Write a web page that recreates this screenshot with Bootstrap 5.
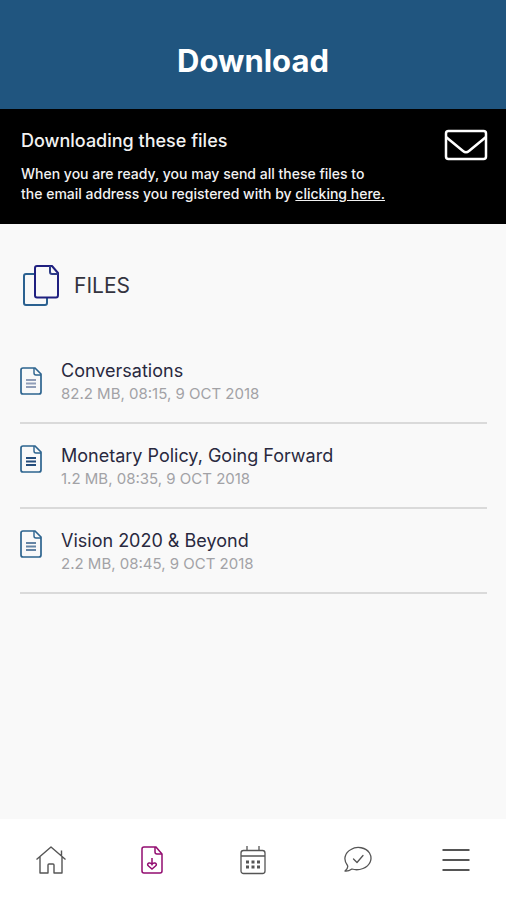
<!DOCTYPE html>
<html lang="en">
<head>
<meta charset="utf-8">
<meta name="viewport" content="width=device-width, initial-scale=1">
<title>Download</title>
<link href="https://cdn.jsdelivr.net/npm/bootstrap@5.3.0/dist/css/bootstrap.min.css" rel="stylesheet">
<style>
  body { font-family: Inter, "Liberation Sans", sans-serif; background: #f9f9f9; color: #25253f; }
  svg { display: block; fill: none; flex: none; }
  .page-top { background: #20557f; padding: 40px 20px 28px; }
  .page-top h1 { font-size: 31px; line-height: 41px; font-weight: 700; }
  .notice { background: #000; color: #f2f2f2; padding: 20px 18px 20px 21px; }
  .notice h2 { font-size: 18px; line-height: 24px; font-weight: 500; margin-bottom: 11px; }
  .notice p { font-size: 14px; line-height: 20px; font-weight: 500; }
  .files { padding: 41px 19px 20px 20px; }
  .files h2 { font-size: 21px; line-height: 26px; font-weight: 400; color: #34343f; }
  .file-list { margin-top: 32px; }
  .file-row { padding: 20px 0 18px; border-bottom: 2px solid #dadada; gap: 19px; }
  .file-row svg { margin-top: 8px; }
  .file-row + .file-row svg { margin-top: 1px; }
  .file-row a { font-size: 18px; line-height: 24px; color: #29293f; }
  .file-row small { font-size: 15px; line-height: 21px; color: #a2a2a6; }
  .tab-bar { background: #fff; height: 81px; }
  .tab-bar a { color: #555; }
  .tab-bar a.active { color: #920c70; }
</style>
<script src="https://cdn.jsdelivr.net/npm/bootstrap@5.3.0/dist/js/bootstrap.bundle.min.js" defer></script>
</head>
<body class="d-flex flex-column min-vh-100">
<svg width="0" height="0" class="position-absolute" aria-hidden="true">
  <symbol id="doc" viewBox="0 0 22 28">
    <path d="M3 1H15L21 7V25Q21 27 19 27H3Q1 27 1 25V3Q1 1 3 1Z" stroke="#2d648f" stroke-width="1.7"/>
    <path d="M14 1V6Q14 8 16 8H21" stroke="#2d648f" stroke-width="1.4"/>
    <path d="M6 13H16M6 16.500H16M6 20H16" stroke="currentColor" stroke-width="1.8"/>
  </symbol>
</svg>

<header class="page-top text-center text-white">
  <h1 class="m-0">Download</h1>
</header>

<section class="notice d-flex justify-content-between align-items-start">
  <div>
    <h2>Downloading these files</h2>
    <p class="mb-0">When you are ready, you may send all these files to<br>the email address you registered with by <a href="#" class="text-reset">clicking here.</a></p>
  </div>
  <svg width="44" height="32" viewBox="0 0 44 32" stroke="#fff" stroke-width="2.500" stroke-linejoin="round" aria-hidden="true">
    <rect x="2" y="2" width="40" height="28" rx="2.500"/>
    <path d="M2 8L19 22Q22 24.500 25 22L42 8"/>
  </svg>
</section>

<main class="files flex-grow-1">
  <div class="d-flex align-items-center">
    <svg width="54" height="42" viewBox="0 0 54 42" stroke-width="2" stroke-linejoin="round" aria-hidden="true">
      <path d="M14 9H6Q4 9 4 11V38Q4 40 6 40H25Q27 40 27 38V33" stroke="#2b6190"/>
      <path d="M17 1H32L38 8V30Q38 32.500 36 32.500H17Q15 32.500 15 30.500V3Q15 1 17 1Z" stroke="#202080"/>
      <path d="M30 1V7Q30 9 32 9H38" stroke="#2d3c86"/>
    </svg>
    <h2 class="m-0">FILES</h2>
  </div>

  <ul class="file-list list-unstyled mb-0">
    <li class="file-row d-flex">
      <svg width="22" height="28" color="#909db7" aria-hidden="true"><use href="#doc"/></svg>
      <div><a href="#" class="d-block text-decoration-none">Conversations</a><small class="d-block">82.2 MB, 08:15, 9 OCT 2018</small></div>
    </li>
    <li class="file-row d-flex">
      <svg width="22" height="28" color="#254d7c" aria-hidden="true"><use href="#doc"/></svg>
      <div><a href="#" class="d-block text-decoration-none">Monetary Policy, Going Forward</a><small class="d-block">1.2 MB, 08:35, 9 OCT 2018</small></div>
    </li>
    <li class="file-row d-flex">
      <svg width="22" height="28" color="#6484a4" aria-hidden="true"><use href="#doc"/></svg>
      <div><a href="#" class="d-block text-decoration-none">Vision 2020 &amp; Beyond</a><small class="d-block">2.2 MB, 08:45, 9 OCT 2018</small></div>
    </li>
  </ul>
</main>

<nav class="tab-bar row row-cols-5 g-0 align-items-center sticky-bottom" aria-label="Main">
  <a href="#" class="col d-flex justify-content-center" aria-label="Home">
    <svg width="30" height="30" viewBox="0 0 30 30" stroke="currentColor" stroke-width="1.400" stroke-linejoin="round">
      <path d="M.5 14.500L15 2L29.500 14.500M4 12V28H12V20Q12 19 13 19H17Q18 19 18 20V28H26V12M25.500 11V5.500"/>
    </svg>
  </a>
  <a href="#" class="col d-flex justify-content-center active" aria-label="Downloads" aria-current="page">
    <svg width="22" height="28" viewBox="0 0 22 28" stroke="currentColor" stroke-width="1.500">
      <path d="M3 1H15L21 8V25Q21 27 19 27H3Q1 27 1 25V3Q1 1 3 1Z"/>
      <path d="M14 1V6Q14 8 16 8H21M11 12V18.500M8 17Q10 16.500 11 18.500Q12 16.500 14 17Q16.500 18 14.500 20L11 23L7.500 20Q5.500 18 8 17Z"/>
    </svg>
  </a>
  <a href="#" class="col d-flex justify-content-center" aria-label="Calendar">
    <svg width="26" height="30" viewBox="0 0 26 30" stroke="currentColor" stroke-width="1.300">
      <rect x="1" y="5.500" width="24" height="23" rx="2.500"/>
      <path d="M1 11H25M7 1V5.500M19 1V5.500"/>
      <path d="M6 17H20M6 22H20" stroke-width="3" stroke-dasharray="3 2.500"/>
    </svg>
  </a>
  <a href="#" class="col d-flex justify-content-center" aria-label="Messages">
    <svg width="36" height="28" viewBox="-8 0 36 28" stroke="currentColor" stroke-width="1.300" stroke-linejoin="round" stroke-linecap="round">
      <path d="M3.500 19.500C-1 14 .5 7 7 3.500C13-.3 22 1.500 25.500 7C29 13 26 20 19 22.500C15 24 11 24 8 23Q4 25.500 1 25Q4.500 22 3.500 19.500Z"/>
      <path d="M9.500 13L13 16.500L19 9.500"/>
    </svg>
  </a>
  <a href="#" class="col d-flex justify-content-center" aria-label="Menu">
    <svg width="30" height="24" viewBox="-2 0 30 24" stroke="currentColor" stroke-width="1.800">
      <path d="M.5 2H27.500M.5 12H27.500M.5 22H27.500"/>
    </svg>
  </a>
</nav>
</body>
</html>
